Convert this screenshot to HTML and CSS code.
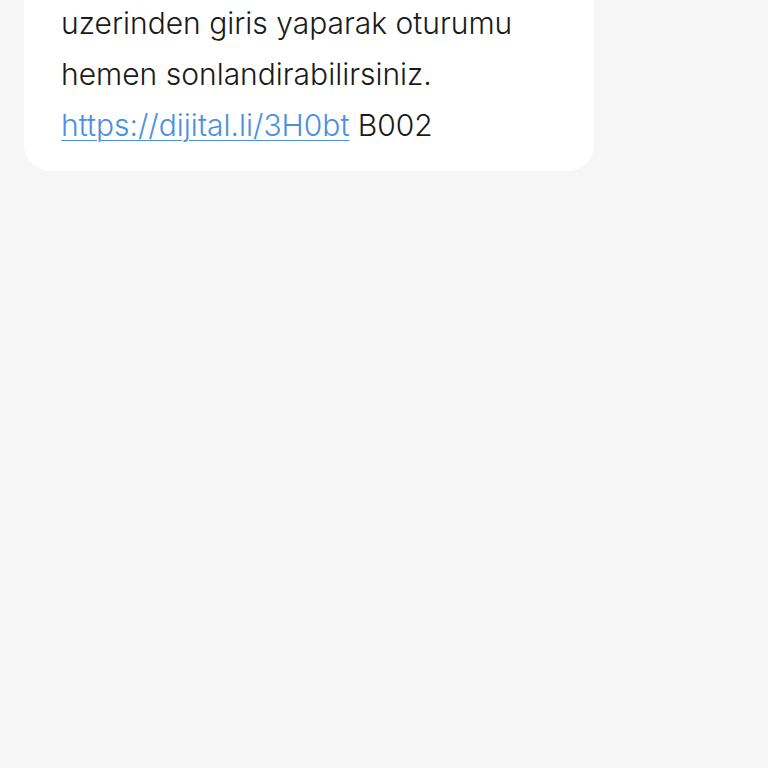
FILE: index.html
```html
<!DOCTYPE html>
<html lang="tr">
<head>
  <meta charset="UTF-8"/>
  <meta name="viewport" content="width=device-width, initial-scale=1"/>
  <title>Mesaj</title>
  <link rel="stylesheet" href="styles.css">
</head>
<body>
  <div class="thread">
    <div class="bubble">
      <p class="msg">uzerinden giris yaparak oturumu hemen sonlandirabilirsiniz. <a href="#">https://dijital.li/3H0bt</a> B002</p>
    </div>
  </div>
</body>
</html>
```

FILE: styles.css
```css
*{box-sizing:border-box;margin:0;padding:0;}
body{background:#f6f6f6;font-family:"Inter","Noto Sans",sans-serif;color:#1a1a1a;}
.thread{padding:0 24px;}
.bubble{width:570px;background:#fff;border-radius:0 0 26px 26px;padding:0 40px 20px 37px;}
.msg{font-size:30px;line-height:51px;margin-top:-2px;font-weight:350;}
.msg a{color:#4a8fe0;text-decoration:underline;text-underline-offset:4px;text-decoration-thickness:1px;}
```
